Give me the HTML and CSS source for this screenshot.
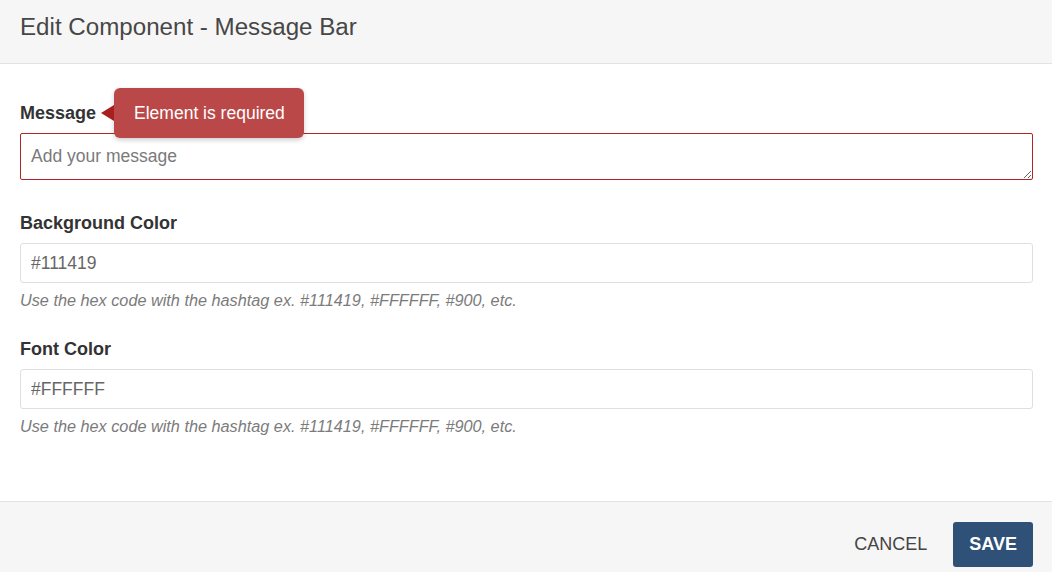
FILE: index.html
```html
<!DOCTYPE html>
<html lang="en">
<head>
<meta charset="utf-8">
<title>Edit Component - Message Bar</title>
<link rel="stylesheet" href="styles.css">
</head>
<body>
<div class="modal">
  <header class="modal-header">
    <h1 class="modal-title">Edit Component - Message Bar</h1>
  </header>
  <main class="modal-body">
    <div class="form-group">
      <div class="label-wrap">
        <label class="field-label" for="msg">Message</label>
        <div class="tooltip">Element is required</div>
      </div>
      <textarea id="msg" class="field-textarea" placeholder="Add your message"></textarea>
    </div>
    <div class="form-group">
      <div class="label-wrap">
        <label class="field-label" for="bg">Background Color</label>
      </div>
      <input id="bg" class="field-input" type="text" value="#111419">
      <p class="hint">Use the hex code with the hashtag ex. #111419, #FFFFFF, #900, etc.</p>
    </div>
    <div class="form-group">
      <div class="label-wrap">
        <label class="field-label" for="fc">Font Color</label>
      </div>
      <input id="fc" class="field-input" type="text" value="#FFFFFF">
      <p class="hint">Use the hex code with the hashtag ex. #111419, #FFFFFF, #900, etc.</p>
    </div>
  </main>
  <footer class="modal-footer">
    <button class="btn btn-cancel" type="button">Cancel</button>
    <button class="btn btn-save" type="button">Save</button>
  </footer>
</div>
</body>
</html>
```
FILE: styles.css
```css
* { box-sizing: border-box; }
html, body {
  margin: 0;
  padding: 0;
  background: #ffffff;
  font-family: "Liberation Sans", Arial, sans-serif;
}
.modal {
  width: 1052px;
}
.modal-header {
  background: #f6f6f6;
  border-bottom: 1px solid #e3e3e3;
  padding: 12px 20px 21px;
}
.modal-title {
  margin: 0;
  font-size: 24.15px;
  line-height: 30px;
  font-weight: normal;
  color: #474747;
}
.modal-body {
  padding: 37px 19px 64px 20px;
}
.form-group {
  margin-bottom: 26px;
}
.form-group:first-child {
  margin-bottom: 31px;
}
.form-group:last-child {
  margin-bottom: 0;
}
.label-wrap {
  position: relative;
  display: flex;
  width: max-content;
  margin-bottom: 8px;
}
.field-label {
  display: block;
  font-size: 18px;
  line-height: 24px;
  font-weight: bold;
  color: #333333;
}
.tooltip {
  position: absolute;
  left: calc(100% + 18px);
  top: 50%;
  transform: translateY(-50%);
  white-space: nowrap;
  background: #bb4848;
  color: #ffffff;
  font-size: 17.5px;
  line-height: 50px;
  height: 50px;
  padding: 0 19px 0 20px;
  border-radius: 6px;
  box-shadow: 0 2px 5px rgba(0, 0, 0, 0.2);
}
.tooltip::before {
  content: "";
  position: absolute;
  left: -13px;
  top: 50%;
  margin-top: -8px;
  border-style: solid;
  border-width: 8px 13px 8px 0;
  border-color: transparent #a81f1f transparent transparent;
}
.field-textarea {
  display: block;
  width: 100%;
  height: 47px;
  border: 1px solid #b32424;
  border-radius: 2px;
  padding: 11px 10px 0;
  font-family: "Liberation Sans", Arial, sans-serif;
  font-size: 17.5px;
  line-height: 22px;
  color: #555555;
  resize: vertical;
  outline: none;
}
.field-textarea::placeholder {
  color: #7a7a7a;
}
.field-input {
  display: block;
  width: 100%;
  height: 40px;
  border: 1px solid #dfdfdf;
  border-radius: 3px;
  padding: 0 10px;
  font-family: "Liberation Sans", Arial, sans-serif;
  font-size: 17.5px;
  color: #666666;
  outline: none;
}
.hint {
  margin: 6px 0 0;
  font-size: 16.25px;
  line-height: 22px;
  font-style: italic;
  color: #7b7b7b;
}
.modal-footer {
  background: #f6f6f6;
  border-top: 1px solid #e3e3e3;
  padding: 20px 19px 20px 20px;
  display: flex;
  justify-content: flex-end;
  align-items: center;
  gap: 13px;
}
.btn {
  font-family: "Liberation Sans", Arial, sans-serif;
  font-size: 18px;
  text-transform: uppercase;
  height: 45px;
  border: none;
  border-radius: 3px;
  cursor: pointer;
}
.btn-cancel {
  background: transparent;
  color: #444444;
  padding: 0 13px;
}
.btn-save {
  background: #2f5077;
  color: #ffffff;
  font-weight: bold;
  padding: 0 16px;
}
```
